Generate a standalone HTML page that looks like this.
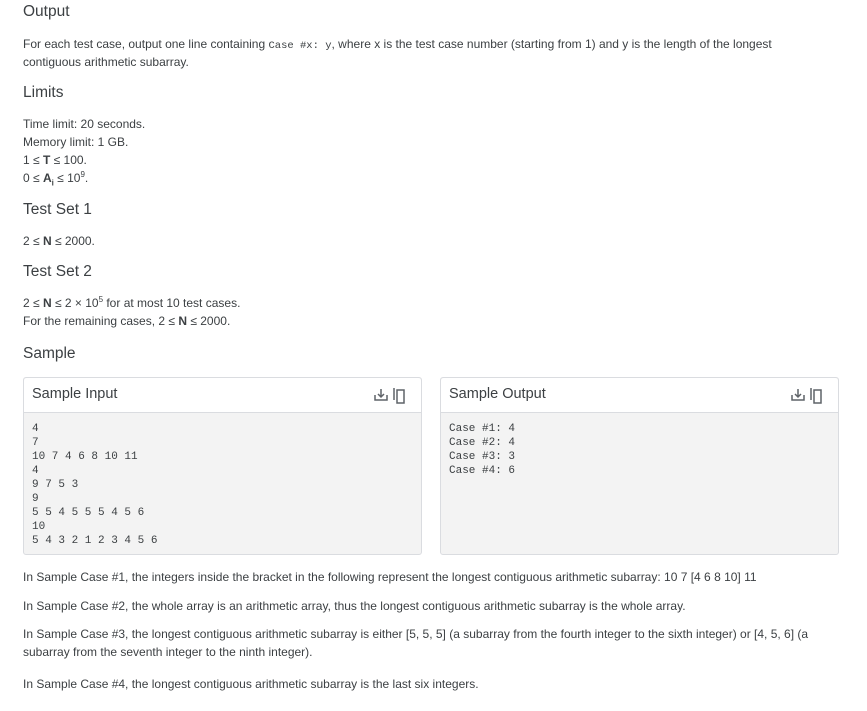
<!DOCTYPE html>
<html><head><meta charset="utf-8"><style>
body{margin:0;width:867px;height:711px;background:#fff;font-family:"Liberation Sans",Arial,sans-serif;color:#202124;position:relative;overflow:hidden}
.t{position:absolute;left:23px;font-size:12px;line-height:18px;white-space:nowrap;color:#3c4043}
.h{position:absolute;left:23px;font-size:15.5px;color:#3c4043;line-height:18px}
code{font-family:"Liberation Mono",monospace;font-size:10.5px}
sup,sub{font-size:8px;line-height:0}
.box{position:absolute;top:377px;width:397px;height:176px;border:1px solid #dadce0;border-radius:3px;background:#f3f3f3}
.hd{height:34px;background:#fff;border-bottom:1px solid #dadce0;position:relative;border-radius:3px 3px 0 0}
.hd span{position:absolute;left:8px;top:8px;font-size:14.5px;color:#3c4043}
.ic{position:absolute;right:10px;top:8px}
pre{margin:0;padding:9px 8px;font-family:"Liberation Mono",monospace;font-size:11px;line-height:14px;color:#3c4043}
</style></head><body>
<div class="h" style="top:3px">Output</div>
<div class="t" style="top:35px">For each test case, output one line containing <code>Case #x: y</code>, where x is the test case number (starting from 1) and y is the length of the longest</div>
<div class="t" style="top:53px">contiguous arithmetic subarray.</div>
<div class="h" style="top:84px">Limits</div>
<div class="t" style="top:115px">Time limit: 20 seconds.</div>
<div class="t" style="top:133px">Memory limit: 1 GB.</div>
<div class="t" style="top:151px">1 ≤ <b>T</b> ≤ 100.</div>
<div class="t" style="top:169px">0 ≤ <b>A<sub>i</sub></b> ≤ 10<sup>9</sup>.</div>
<div class="h" style="top:201px">Test Set 1</div>
<div class="t" style="top:232px">2 ≤ <b>N</b> ≤ 2000.</div>
<div class="h" style="top:263px">Test Set 2</div>
<div class="t" style="top:294px">2 ≤ <b>N</b> ≤ 2 × 10<sup>5</sup> for at most 10 test cases.</div>
<div class="t" style="top:312px">For the remaining cases, 2 ≤ <b>N</b> ≤ 2000.</div>
<div class="h" style="top:345px">Sample</div>
<div class="box" style="left:23px"><div class="hd"><span>Sample Input</span>
<svg class="ic" width="38" height="18" viewBox="0 0 38 18"><path d="M2 9v5h12V9M8 3v8M5 8l3 3 3-3" fill="none" stroke="#5f6368" stroke-width="1.5"/><path d="M21 14V2M24 4h7v13h-7z" fill="none" stroke="#5f6368" stroke-width="1.5"/></svg></div>
<pre>4
7
10 7 4 6 8 10 11
4
9 7 5 3
9
5 5 4 5 5 5 4 5 6
10
5 4 3 2 1 2 3 4 5 6</pre></div>
<div class="box" style="left:440px"><div class="hd"><span>Sample Output</span>
<svg class="ic" width="38" height="18" viewBox="0 0 38 18"><path d="M2 9v5h12V9M8 3v8M5 8l3 3 3-3" fill="none" stroke="#5f6368" stroke-width="1.5"/><path d="M21 14V2M24 4h7v13h-7z" fill="none" stroke="#5f6368" stroke-width="1.5"/></svg></div>
<pre>Case #1: 4
Case #2: 4
Case #3: 3
Case #4: 6</pre></div>
<div class="t" style="top:568px">In Sample Case #1, the integers inside the bracket in the following represent the longest contiguous arithmetic subarray: 10 7 [4 6 8 10] 11</div>
<div class="t" style="top:597px">In Sample Case #2, the whole array is an arithmetic array, thus the longest contiguous arithmetic subarray is the whole array.</div>
<div class="t" style="top:625px">In Sample Case #3, the longest contiguous arithmetic subarray is either [5, 5, 5] (a subarray from the fourth integer to the sixth integer) or [4, 5, 6] (a</div>
<div class="t" style="top:643px">subarray from the seventh integer to the ninth integer).</div>
<div class="t" style="top:675px">In Sample Case #4, the longest contiguous arithmetic subarray is the last six integers.</div>
</body></html>
